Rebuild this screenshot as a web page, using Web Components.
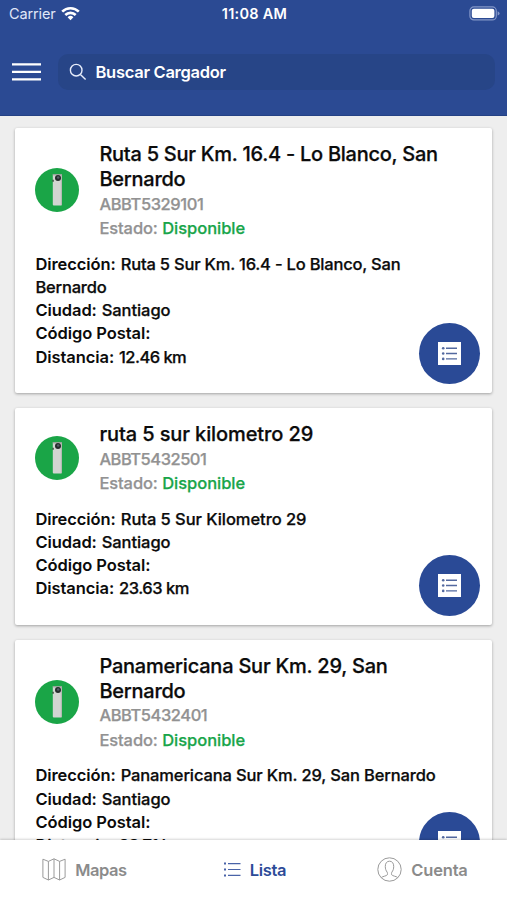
<!DOCTYPE html>
<html lang="es">
<head>
<meta charset="utf-8">
<title>Cargadores</title>
<style>
html, body { margin: 0; height: 100%; overflow: hidden; }
body { font-family: Inter, "Liberation Sans", sans-serif; font-weight: 500; color: #0b0b0b; background: #eee; }
</style>
</head>
<body>
<charger-app></charger-app>
<script>
const define = (name, html, setup) => {
  const tpl = document.createElement('template');
  tpl.innerHTML = html;
  customElements.define(name, class extends HTMLElement {
    connectedCallback() {
      if (this.shadowRoot) return;
      const root = this.attachShadow({ mode: 'open' });
      root.append(tpl.content.cloneNode(true));
      if (setup) setup(this, root);
    }
  });
};

define('text-run', `<style>:host { display: inline; }</style><slot></slot>`,
  el => { el.style.letterSpacing = el.getAttribute('track') + 'px'; });

define('status-bar', `
<style>
:host { display: grid; grid-template-columns: 1fr auto 1fr; align-items: center; height: 28px; padding: 0 7px 0 9px; box-sizing: border-box; color: #fff; }
.left { display: flex; align-items: center; gap: 5px; font-size: 14.5px; font-weight: 400; color: #e0e7f8; letter-spacing: -.12px; margin-top: -2px; }
.time { font-size: 14.5px; font-weight: 600; letter-spacing: .25px; margin: -2px 0 0 0; }
.battery { justify-self: end; margin-top: -1px; }
svg { display: block; }
</style>
<div class="left"><span>Carrier</span>
<svg width="19" height="15" viewBox="0 0 19 15" fill="none" stroke="#fff" stroke-width="2.6"><path d="M1.2 5.6a11.8 11.8 0 0 1 16.6 0"/><path d="M4.3 9a7.4 7.4 0 0 1 10.4 0"/><path d="M9.5 14.2 6.6 11.2a4.2 4.2 0 0 1 5.8 0z" fill="#fff" stroke="none"/></svg></div>
<div class="time">11:08 AM</div>
<svg class="battery" width="31" height="15" viewBox="0 0 31 15"><rect x=".9" y=".9" width="26.4" height="13" rx="4" fill="none" stroke="#8497c8" stroke-width="1.2"/><rect x="2.8" y="2.8" width="22.6" height="9.2" rx="2" fill="#fff"/><path d="M28.6 5.2q2 .8 2 2.2t-2 2.2z" fill="#8497c8"/></svg>`);

define('search-bar', `
<style>
:host { display: flex; align-items: center; gap: 17px; padding: 26px 12.5px 0 12px; }
svg { display: block; flex: none; }
.field { flex: 1; height: 36px; border-radius: 10px; background: #274587; display: flex; align-items: center; gap: 8.5px; padding-left: 11px; color: #fff; font-size: 16.5px; letter-spacing: -.28px; font-weight: 600; }
</style>
<svg width="29" height="20" viewBox="0 0 29 20" fill="#fff"><path d="M0 1.2h29v2.3H0zM0 8.7h29V11H0zM0 16.2h29v2.3H0z"/></svg>
<div class="field"><svg width="18" height="18" viewBox="0 0 18 18" fill="none" stroke="#e6ecfa" stroke-width="1.4"><circle cx="7.2" cy="7.2" r="5.8"/><path d="m11.4 11.4 5.2 5.2"/></svg><span>Buscar Cargador</span></div>`);

define('charger-badge', `
<style>:host, svg { display: block; }</style>
<svg width="44" height="44" viewBox="0 0 44 44"><circle cx="22" cy="22" r="22" fill="#1aa547"/><path d="M17.8 6.3H27v30.2q0 1-1 1h-7.2q-1 0-1-1z" fill="#d2d5d1"/><path d="M25.8 7H27v30h-1.2z" fill="#b4bab3"/><path d="M17.8 6.3H27v1h-9.2z" fill="#909890"/><circle cx="23" cy="9.9" r="3" fill="#252b2b"/><circle cx="23.2" cy="9.5" r="1.3" fill="#555d68"/><path d="M17.3 11.8h1.5v2h-1.5z" fill="#38543f"/></svg>`);

define('list-button', `
<style>
:host { display: grid; place-items: center; width: 61px; height: 61px; border-radius: 50%; background: #2a4a96; }
svg { display: block; }
</style>
<svg width="23" height="23" viewBox="0 0 23 23"><path d="M0 0h23v23H0z" fill="#fff"/><g fill="#53699f"><circle cx="5.2" cy="6.2" r="1.3"/><circle cx="5.2" cy="11.5" r="1.3"/><circle cx="5.2" cy="16.9" r="1.3"/><path d="M8 5.5h11v1.4H8zM8 10.8h11v1.4H8zM8 16.2h11v1.4H8z"/></g></svg>`);

define('charger-card', `
<style>
:host { display: block; position: relative; background: #fff; border-radius: 2px; padding: 14px 20px 24.2px; box-shadow: 0 1px 3px rgba(0,0,0,.32); -webkit-text-stroke: .25px currentColor; }
.head { display: flex; align-items: center; gap: 20px; margin-bottom: 11.5px; }
charger-badge { flex: none; margin-top: -2.5px; }
.info { flex: 1; line-height: 24.75px; font-size: 16.5px; color: #929292; }
.title { font-size: 20px; color: #0b0b0b; }
.state { color: #18a54a; }
.rows { font-size: 16.5px; line-height: 23.25px; padding-right: 20px; }
b { font-weight: 600; letter-spacing: -.07px; margin-right: .5px; -webkit-text-stroke: 0; }
list-button { position: absolute; right: 12px; bottom: 8.5px; }
</style>
<div class="head"><charger-badge></charger-badge>
<div class="info"><div class="title"><slot name="title"></slot></div><div><slot name="code"></slot></div>
<div><text-run track="-0.1">Estado:</text-run> <text-run class="state" track="-0.03">Disponible</text-run></div></div></div>
<div class="rows">
<div><b>Dirección:</b> <slot name="address"></slot></div>
<div><b>Ciudad:</b> <text-run track="-0.07">Santiago</text-run></div>
<div><b>Código Postal:</b></div>
<div><b>Distancia:</b> <slot name="distance"></slot></div>
</div>
<list-button></list-button>`);

define('nav-tab', `
<style>
:host { display: flex; align-items: center; justify-content: center; gap: 9px; color: #8b8b8b; font-size: 16.5px; font-weight: 600; padding-bottom: 1px; }
:host([active]) { color: #2c4b98; padding-left: 3px; }
</style>
<slot name="icon"></slot><slot></slot>`);

define('nav-bar', `
<style>
:host { display: grid; grid-template-columns: repeat(3, 1fr); height: 60px; background: #fff; box-shadow: 0 -1px 2px rgba(0,0,0,.16); position: relative; }
svg { display: block; }
</style>
<nav-tab><svg slot="icon" width="24" height="23" viewBox="0 0 24 23" fill="none" stroke="#9a9a9a" stroke-width="1"><path d="M.9 1.2 6.4 3.4 12 .8l5.6 2.6 5.5-2.2v18.2l-5.5 2.6-5.6-2.6L6.4 22 .9 19.4zM6.4 3.4V22M12 .8v18.6M17.6 3.4V22"/></svg><text-run track="-0.45">Mapas</text-run></nav-tab>
<nav-tab active><svg slot="icon" width="17" height="15" viewBox="0 0 17 15" fill="#4963a8"><path d="M0 .6h2v2H0zM4 1h12.5v1.2H4zM0 6.5h2v2H0zM4 6.9h12.5v1.2H4zM0 12.4h2v2H0zM4 12.8h12.5V14H4z"/></svg><text-run track="-0.35">Lista</text-run></nav-tab>
<nav-tab><svg slot="icon" width="25" height="25" viewBox="0 0 25 25" fill="none" stroke="#9a9a9a" stroke-width="1"><circle cx="12.5" cy="12.5" r="11.7"/><path d="M4.3 20.5c1.6-1.3 5.4-1.5 6-2.7.4-.8.2-1.900-.1-2.600-1.300-1.500-1.900-3.400-1.900-5.800 0-3.200 1.500-5.200 4.200-5.200s4.200 2 4.200 5.200c0 2.400-.6 4.300-1.900 5.800-.3.700-.5 1.800-.1 2.600.6 1.200 4.400 1.400 6 2.700"/></svg><text-run track="-0.2">Cuenta</text-run></nav-tab>`);

define('charger-app', `
<style>
:host { display: grid; grid-template-rows: 115.5px 1fr auto; height: 100vh; }
header { background: #2b4a93; border-bottom: 1px solid #244184; box-sizing: border-box; }
main { min-height: 0; overflow: hidden; background: #eee; display: flex; flex-direction: column; gap: 15px; padding: 12.5px 15px 0 15.4px; }
charger-card { flex: none; }
</style>
<header><status-bar></status-bar><search-bar></search-bar></header>
<main>
<charger-card><text-run slot="title"><text-run track="-0.26">Ruta 5 Sur Km. 16.4 - Lo Blanco, San</text-run> <text-run track="-0.25">Bernardo</text-run></text-run><text-run slot="code" track="-0.42">ABBT5329101</text-run><text-run slot="address"><text-run track="-0.2">Ruta 5 Sur Km. 16.4 - Lo Blanco, San</text-run> <text-run track="-0.2">Bernardo</text-run></text-run><text-run slot="distance" track="-0.55">12.46 km</text-run></charger-card>
<charger-card><text-run slot="title" track="-0.11">ruta 5 sur kilometro 29</text-run><text-run slot="code" track="-0.5">ABBT5432501</text-run><text-run slot="address" track="-0.05">Ruta 5 Sur Kilometro 29</text-run><text-run slot="distance" track="-0.47">23.63 km</text-run></charger-card>
<charger-card><text-run slot="title"><text-run track="-0.22">Panamericana Sur Km. 29, San</text-run> <text-run track="-0.25">Bernardo</text-run></text-run><text-run slot="code" track="-0.45">ABBT5432401</text-run><text-run slot="address" track="-0.14">Panamericana Sur Km. 29, San Bernardo</text-run><text-run slot="distance" track="-0.47">23.71 km</text-run></charger-card>
</main>
<nav-bar></nav-bar>`);
</script>
</body>
</html>
